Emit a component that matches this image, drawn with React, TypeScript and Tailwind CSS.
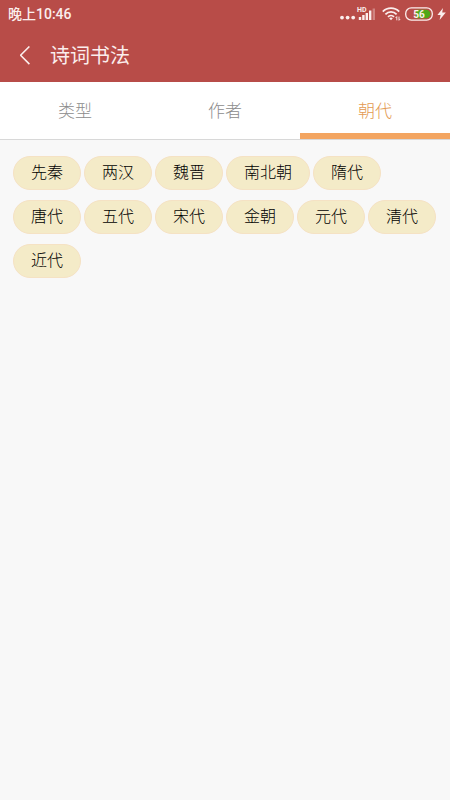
import React, { useState } from 'react';

const tabs = [
  { id: 'type', label: '类型' },
  { id: 'author', label: '作者' },
  { id: 'dynasty', label: '朝代' },
];

const dynasties = ['先秦', '两汉', '魏晋', '南北朝', '隋代', '唐代', '五代', '宋代', '金朝', '元代', '清代', '近代'];

function SignalIcon() {
  return (
    <svg width="36" height="16" viewBox="0 0 36 16" fill="currentColor" aria-hidden="true">
      <circle cx="2" cy="11.6" r="1.9" />
      <circle cx="7.6" cy="11.6" r="1.9" />
      <circle cx="13.2" cy="11.6" r="1.9" />
      <text x="17" y="6" fontSize="7" fontFamily="Roboto, sans-serif" fontWeight="700">HD</text>
      <rect x="18.8" y="11" width="2.4" height="3" />
      <rect x="22.2" y="9" width="2.4" height="5" />
      <rect x="25.6" y="7" width="2.4" height="7" />
      <rect x="29" y="4.5" width="2.4" height="9.5" />
      <rect x="32.6" y="2.5" width="2.4" height="11.5" opacity="0.35" />
    </svg>
  );
}

function WifiIcon() {
  return (
    <svg width="19" height="16" viewBox="0 0 19 16" fill="none" stroke="currentColor" strokeWidth="1.8" aria-hidden="true">
      <path d="M0.8 5.6C5.3 1 12.7 1 17.2 5.6" />
      <path d="M3.4 8.3C6.6 5.1 11.4 5.1 14.6 8.3" />
      <path d="M6 10.9C7.7 9.2 10.3 9.2 12 10.9" />
      <path d="M9 14.2L7.2 12.2C8.2 11.3 9.8 11.3 10.8 12.2Z" fill="currentColor" stroke="none" />
      <path d="M14.8 14.3V10.6L13.6 12M17 10.6V14.3L18.2 13" strokeWidth="0.9" />
    </svg>
  );
}

function BatteryIcon({ level }: { level: number }) {
  return (
    <svg width="28" height="14" viewBox="0 0 28 14" aria-hidden="true">
      <rect x="0.7" y="0.9" width="26.6" height="12.2" rx="5.6" fill="none" stroke="currentColor" strokeWidth="1.3" />
      <path d="M11 2.8H21.2A4.2 4.2 0 0 1 21.2 11.2H11Z" fill="#4fa818" />
      <text x="14" y="10.6" textAnchor="middle" fontSize="10" fontWeight="700" fontFamily="Roboto, sans-serif" fill="currentColor">
        {level}
      </text>
    </svg>
  );
}

function StatusBar() {
  return (
    <div className="flex h-7 items-center justify-between pr-1 pl-2">
      <span className="text-sm font-medium">晚上10:46</span>
      <div className="flex items-center">
        <SignalIcon />
        <span className="ml-1.5 flex">
          <WifiIcon />
        </span>
        <span className="ml-1 flex">
          <BatteryIcon level={56} />
        </span>
        <svg className="ml-1" width="9" height="14" viewBox="0 0 9 14" fill="currentColor" aria-hidden="true">
          <path d="M6 1L0.4 8H3.6L2.6 13L8.8 5.6H5.2Z" />
        </svg>
      </div>
    </div>
  );
}

export default function App() {
  const [activeTab, setActiveTab] = useState('dynasty');

  return (
    <div className="min-h-screen bg-[#f8f8f8] font-['Roboto','Noto_Sans_CJK_SC',sans-serif]">
      <header className="bg-[#b84c48] text-[#fbeeed]">
        <StatusBar />
        <div className="flex h-[54px] items-center gap-[18px] px-5 pt-0.5">
          <button type="button" aria-label="返回" className="flex w-3">
            <svg width="12" height="20" viewBox="0 0 12 20" fill="none" stroke="currentColor" strokeWidth="1.6" aria-hidden="true">
              <path d="M9.4 0.5L0.6 9.3L9.4 18.1" />
            </svg>
          </button>
          <h1 className="text-xl font-normal">诗词书法</h1>
        </div>
      </header>

      {/* Category tabs */}
      <nav className="flex h-[58px] border-b border-[#d8d8d8] bg-white">
        {tabs.map((tab) => (
          <button
            key={tab.id}
            type="button"
            onClick={() => setActiveTab(tab.id)}
            className={`flex-1 border-b-6 pt-2 text-[17px] font-light ${
              activeTab === tab.id ? 'border-[#f3a561] text-[#e39a52]' : 'border-transparent text-[#8c8c8c]'
            }`}
          >
            {tab.label}
          </button>
        ))}
      </nav>

      {/* Dynasty filters */}
      <main className="flex flex-wrap gap-x-[3px] gap-y-2.5 px-[13px] py-4">
        {dynasties.map((name) => (
          <button
            key={name}
            type="button"
            className="h-[34px] rounded-full border border-[#f5e2c4] bg-[#f4ebc8] px-[17px] text-base font-light text-black"
          >
            {name}
          </button>
        ))}
      </main>
    </div>
  );
}
